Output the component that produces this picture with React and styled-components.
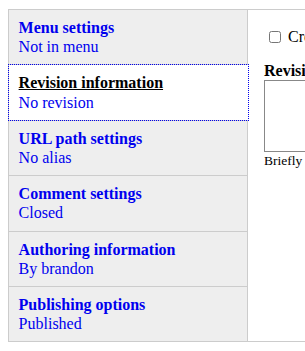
import React from "react";
import styled, { createGlobalStyle } from "styled-components";

const Global = createGlobalStyle`
  html, body {
    margin: 0;
    overflow: hidden;
  }
  body {
    padding: 9px 0 0 8px;
    background: #fff;
    font-family: "Liberation Serif", "Times New Roman", serif;
    font-size: 16px;
    color: #000;
  }
`;

const Tabs = styled.div`
  display: flex;
  align-items: flex-start;
  width: 420px;
  border: 1px solid #ccc;
`;

const TabList = styled.ul`
  list-style: none;
  margin: 0;
  padding: 0;
  width: 239px;
  flex: none;
`;

const Tab = styled.li`
  background: ${(p) => (p.selected ? "#fff" : "#eee")};
  border-right: ${(p) => (p.selected ? "0" : "1px solid #ccc")};
  border-bottom: ${(p) => (p.last ? "0" : "1px solid #ccc")};
  position: relative;
  z-index: ${(p) => (p.selected ? 1 : 0)};
`;

const TabLink = styled.a`
  display: block;
  padding: 8px 9.6px;
  line-height: 19.2px;
  color: #00e;
  text-decoration: none;
  outline: ${(p) => (p.selected ? "1px dotted #00e" : "none")};
`;

const Title = styled.strong`
  display: block;
  font-weight: bold;
  color: ${(p) => (p.selected ? "#000" : "#00e")};
  text-decoration: ${(p) => (p.selected ? "underline" : "none")};
`;

const Summary = styled.span`
  display: block;
`;

const Pane = styled.div`
  flex: 1;
  align-self: stretch;
  border-left: 1px solid #ccc;
  margin-left: -1px;
  padding: 0 16px;
`;

const CheckRow = styled.label`
  display: flex;
  align-items: center;
  gap: 7px;
  margin-top: 18px;
  white-space: nowrap;
`;

const Check = styled.input`
  margin: 0 0 0 5px;
  width: 12px;
  height: 12px;
`;

const Label = styled.div`
  margin-top: 15px;
  font-weight: bold;
  line-height: 19px;
  white-space: nowrap;
`;

const TextArea = styled.textarea`
  display: block;
  box-sizing: border-box;
  width: 260px;
  height: 72px;
  margin: 0;
  border: 1px solid #888;
  resize: none;
`;

const Description = styled.div`
  font-size: 13.5px;
  line-height: 15px;
  margin-top: 1px;
  white-space: nowrap;
`;

const tabs = [
  { title: "Menu settings", summary: "Not in menu" },
  { title: "Revision information", summary: "No revision", selected: true },
  { title: "URL path settings", summary: "No alias" },
  { title: "Comment settings", summary: "Closed" },
  { title: "Authoring information", summary: "By brandon" },
  { title: "Publishing options", summary: "Published" },
];

export default function App() {
  return (
    <>
      <Global />
      <Tabs>
        <TabList>
          {tabs.map((t, i) => (
            <Tab key={t.title} selected={t.selected} last={i === tabs.length - 1}>
              <TabLink href="#" selected={t.selected} onClick={(e) => e.preventDefault()}>
                <Title selected={t.selected}>{t.title}</Title>
                <Summary>{t.summary}</Summary>
              </TabLink>
            </Tab>
          ))}
        </TabList>
        <Pane>
          <CheckRow>
            <Check type="checkbox" />
            Create new revision
          </CheckRow>
          <Label>Revision log message</Label>
          <TextArea />
          <Description>Briefly describe the changes you have made.</Description>
        </Pane>
      </Tabs>
    </>
  );
}
